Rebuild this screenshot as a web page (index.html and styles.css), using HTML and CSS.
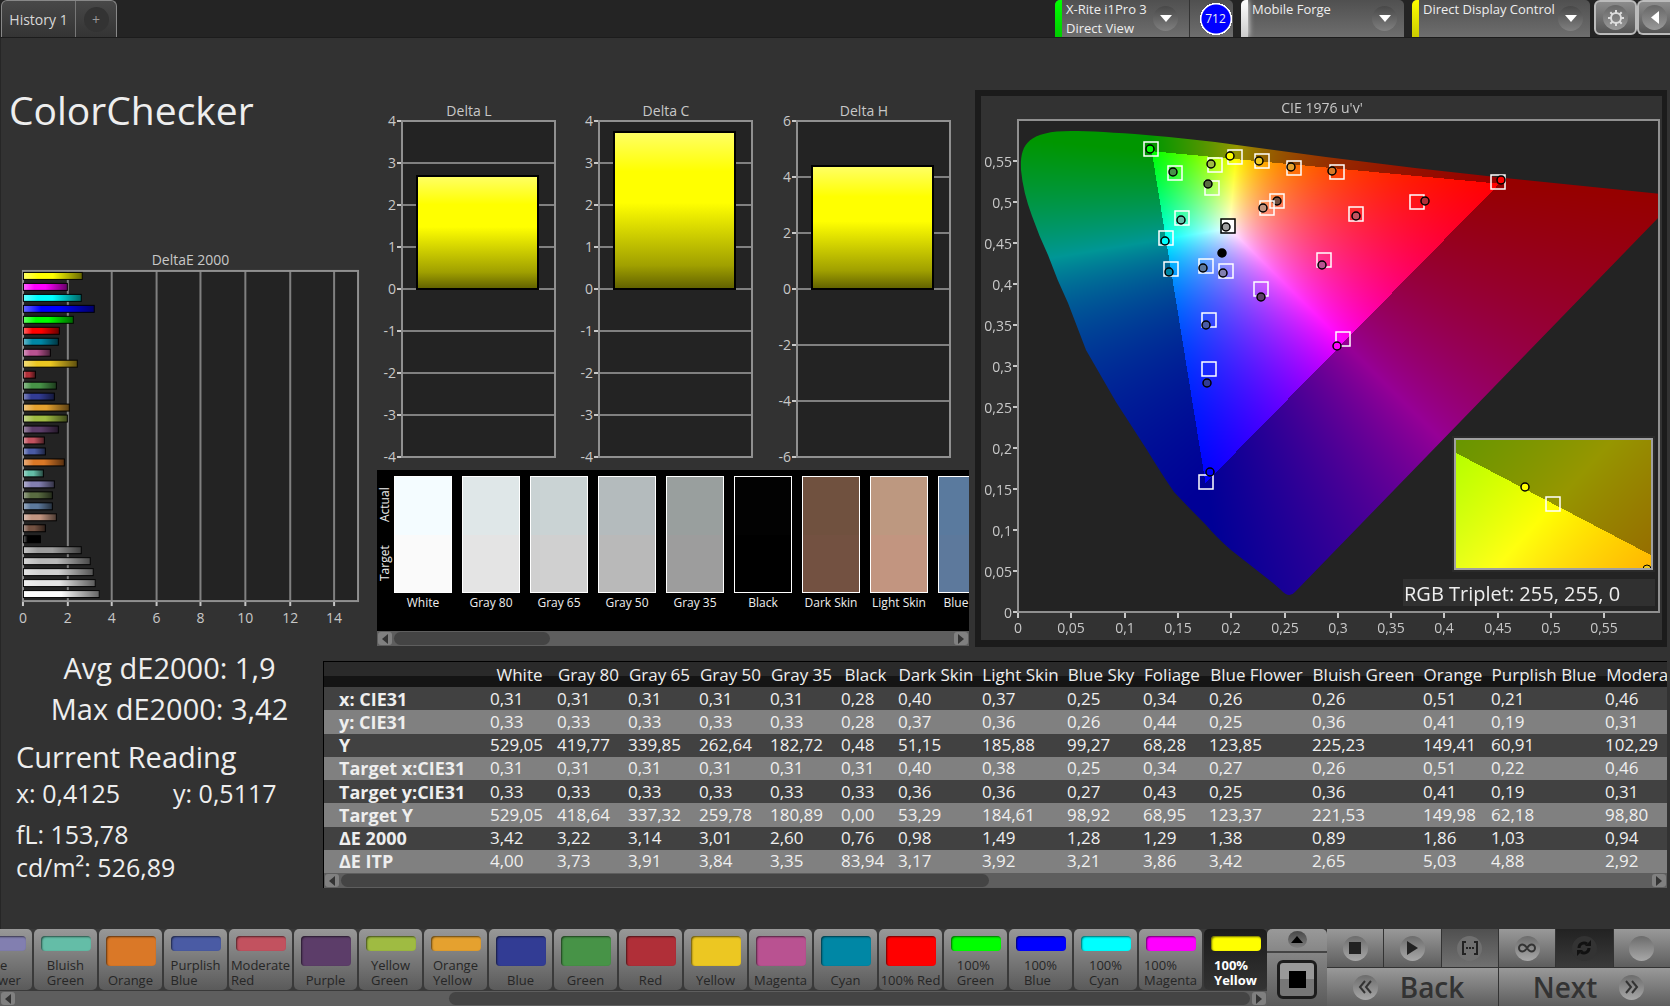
FILE: index.html
```html
<!DOCTYPE html>
<html lang="en">
<head>
  <meta charset="UTF-8">
  <meta name="viewport" content="width=device-width, initial-scale=1.0">
  <title>ColorChecker</title>
  <link rel="stylesheet" href="styles.css">
</head>
<body>
  <header class="topbar">
    <nav class="tabs">
      <button class="tab">History 1</button>
      <button class="tab tab-add" aria-label="Add history"><span class="knob">+</span></button>
    </nav>
    <div class="devices">
      <div class="device device-meter">
        <span class="strip green"></span>
        <button class="device-name">X-Rite i1Pro 3<br>Direct View</button>
        <span class="knob arrow"><svg width="12" height="7"><path d="M0 0h12l-6 7z"/></svg></span>
        <span class="meter-id">712</span>
      </div>
      <div class="device device-source">
        <span class="strip white"></span>
        <select class="device-name" aria-label="Source"><option>Mobile Forge</option></select>
        <span class="knob arrow"><svg width="12" height="7"><path d="M0 0h12l-6 7z"/></svg></span>
      </div>
      <div class="device device-display">
        <span class="strip yellow"></span>
        <select class="device-name" aria-label="Display"><option>Direct Display Control</option></select>
        <span class="knob arrow"><svg width="12" height="7"><path d="M0 0h12l-6 7z"/></svg></span>
      </div>
      <button class="tool" aria-label="Settings"><span class="knob light">
        <svg width="18" height="18" viewBox="0 0 18 18"><circle cx="9" cy="9" r="5" fill="none" stroke="#ddd" stroke-width="2"/><path d="M9 1v3M9 14v3M1 9h3M14 9h3M3.300 3.300l2.200 2.200M12.500 12.500l2.200 2.200M3.300 14.700l2.200-2.200M12.500 5.500l2.200-2.200" stroke="#ddd" stroke-width="2"/></svg>
      </span></button>
      <button class="tool tool-last" aria-label="Collapse"><span class="knob light"><svg width="8" height="13"><path d="M8 0v13L0 6.500z" fill="#fff"/></svg></span></button>
    </div>
  </header>

  <main class="workspace">
    <section class="upper">
      <div class="col-left">
        <h1>ColorChecker</h1>
        <svg id="deltaE" class="chart" viewBox="0 0 377 380"></svg>
      </div>
      <div class="col-mid">
        <svg id="deltas" class="chart" viewBox="0 0 592 380"></svg>
        <div class="compare">
          <div class="compare-side"><span>Target</span><span>Actual</span></div>
          <div class="compare-list" id="compareList"></div>
        </div>
        <div class="scrollbar">
          <button class="sb-btn" aria-label="Scroll left"><svg width="6" height="10"><path d="M6 0v10L0 5z"/></svg></button>
          <div class="sb-track"><div class="sb-thumb" style="width: 28%"></div></div>
          <button class="sb-btn" aria-label="Scroll right"><svg width="6" height="10"><path d="M0 0v10l6-5z"/></svg></button>
        </div>
      </div>
      <div class="col-right">
        <div class="cie">
          <svg id="cie" class="chart" viewBox="0 0 681 544">
            <rect x="37" y="24" width="641" height="492" fill="#232323"/>
            <foreignObject x="37" y="24" width="641" height="492"><canvas id="cieCanvas" width="641" height="492"></canvas></foreignObject>
            <g id="cieAxes"></g>
            <g id="cieMarks"></g>
            <rect x="422" y="483" width="252" height="27" fill="#303030"/>
            <text x="423" y="505" class="rgb-label">RGB Triplet: 255, 255, 0</text>
            <rect x="471" y="340" width="203" height="136" fill="#2a2a2a"/>
            <foreignObject x="474" y="343" width="197" height="130"><canvas id="insetCanvas" width="197" height="130"></canvas></foreignObject>
            <g id="insetMarks"></g>
            <rect x="474" y="343" width="197" height="130" fill="none" stroke="#a0a0a0" stroke-width="2"/>
          </svg>
        </div>
      </div>
    </section>

    <section class="lower">
      <div class="stats">
        <p class="stat-big center">Avg dE2000: 1,9</p>
        <p class="stat-big center">Max dE2000: 3,42</p>
        <h2 class="stat-big">Current Reading</h2>
        <p class="stat pair"><span>x: 0,4125</span><span>y: 0,5117</span></p>
        <p class="stat">fL: 153,78</p>
        <p class="stat">cd/m²: 526,89</p>
      </div>
      <div class="data">
        <div class="table-clip">
          <table>
            <colgroup>
              <col class="w-label"><col class="w-67"><col class="w-71"><col class="w-71"><col class="w-71"><col class="w-71"><col class="w-57"><col class="w-84"><col class="w-85"><col class="w-76"><col class="w-66"><col class="w-103"><col class="w-111"><col class="w-68"><col class="w-114"><col class="w-124">
            </colgroup>
            <thead>
              <tr><td></td><th>White</th><th>Gray 80</th><th>Gray 65</th><th>Gray 50</th><th>Gray 35</th><th>Black</th><th>Dark Skin</th><th>Light Skin</th><th>Blue Sky</th><th>Foliage</th><th>Blue Flower</th><th>Bluish Green</th><th>Orange</th><th>Purplish Blue</th><th>Moderate Red</th></tr>
            </thead>
            <tbody>
              <tr><th>x: CIE31</th><td>0,31</td><td>0,31</td><td>0,31</td><td>0,31</td><td>0,31</td><td>0,28</td><td>0,40</td><td>0,37</td><td>0,25</td><td>0,34</td><td>0,26</td><td>0,26</td><td>0,51</td><td>0,21</td><td>0,46</td></tr>
              <tr><th>y: CIE31</th><td>0,33</td><td>0,33</td><td>0,33</td><td>0,33</td><td>0,33</td><td>0,28</td><td>0,37</td><td>0,36</td><td>0,26</td><td>0,44</td><td>0,25</td><td>0,36</td><td>0,41</td><td>0,19</td><td>0,31</td></tr>
              <tr><th>Y</th><td>529,05</td><td>419,77</td><td>339,85</td><td>262,64</td><td>182,72</td><td>0,48</td><td>51,15</td><td>185,88</td><td>99,27</td><td>68,28</td><td>123,85</td><td>225,23</td><td>149,41</td><td>60,91</td><td>102,29</td></tr>
              <tr><th>Target x:CIE31</th><td>0,31</td><td>0,31</td><td>0,31</td><td>0,31</td><td>0,31</td><td>0,31</td><td>0,40</td><td>0,38</td><td>0,25</td><td>0,34</td><td>0,27</td><td>0,26</td><td>0,51</td><td>0,22</td><td>0,46</td></tr>
              <tr><th>Target y:CIE31</th><td>0,33</td><td>0,33</td><td>0,33</td><td>0,33</td><td>0,33</td><td>0,33</td><td>0,36</td><td>0,36</td><td>0,27</td><td>0,43</td><td>0,25</td><td>0,36</td><td>0,41</td><td>0,19</td><td>0,31</td></tr>
              <tr><th>Target Y</th><td>529,05</td><td>418,64</td><td>337,32</td><td>259,78</td><td>180,89</td><td>0,00</td><td>53,29</td><td>184,61</td><td>98,92</td><td>68,95</td><td>123,37</td><td>221,53</td><td>149,98</td><td>62,18</td><td>98,80</td></tr>
              <tr><th>ΔE 2000</th><td>3,42</td><td>3,22</td><td>3,14</td><td>3,01</td><td>2,60</td><td>0,76</td><td>0,98</td><td>1,49</td><td>1,28</td><td>1,29</td><td>1,38</td><td>0,89</td><td>1,86</td><td>1,03</td><td>0,94</td></tr>
              <tr><th>ΔE ITP</th><td>4,00</td><td>3,73</td><td>3,91</td><td>3,84</td><td>3,35</td><td>83,94</td><td>3,17</td><td>3,92</td><td>3,21</td><td>3,86</td><td>3,42</td><td>2,65</td><td>5,03</td><td>4,88</td><td>2,92</td></tr>
            </tbody>
          </table>
        </div>
        <div class="scrollbar">
          <button class="sb-btn" aria-label="Scroll left"><svg width="6" height="10"><path d="M6 0v10L0 5z"/></svg></button>
          <div class="sb-track"><div class="sb-thumb" style="width: 49.5%"></div></div>
          <button class="sb-btn" aria-label="Scroll right"><svg width="6" height="10"><path d="M0 0v10l6-5z"/></svg></button>
        </div>
      </div>
    </section>
  </main>

  <footer class="bottombar">
    <div class="patch-area">
      <div class="patches" id="patches"></div>
      <div class="scrollbar">
        <button class="sb-btn" aria-label="Scroll left"><svg width="6" height="10"><path d="M6 0v10L0 5z"/></svg></button>
        <div class="sb-track"><div class="sb-thumb" style="width: 65%; margin-left: auto"></div></div>
        <button class="sb-btn" aria-label="Scroll right"><svg width="6" height="10"><path d="M0 0v10l6-5z"/></svg></button>
      </div>
    </div>
    <div class="pattern">
      <button class="pattern-up" aria-label="Show patterns"><span class="knob small"><svg width="12" height="7"><path d="M0 7h12L6 0z"/></svg></span></button>
      <button class="pattern-window" aria-label="Window pattern"><span></span></button>
    </div>
    <div class="transport">
      <div class="transport-row">
        <button aria-label="Stop"><span class="knob pale"><svg width="12" height="12"><path d="M0 0h12v12H0z"/></svg></span></button>
        <button aria-label="Play"><span class="knob pale"><svg width="11" height="14"><path d="M0 0l11 7-11 7z"/></svg></span></button>
        <button class="dim" aria-label="Read series"><span class="knob pale"><svg width="18" height="14" viewBox="0 0 18 14"><path d="M5 1H2v12h3M13 1h3v12h-3" fill="none" stroke="#222" stroke-width="2"/><path d="M5 6h2v2H5zM8 6h2v2H8zM11 6h2v2h-2z"/></svg></span></button>
        <button aria-label="Continuous"><span class="knob pale"><svg width="18" height="10" viewBox="0 0 18 10"><path d="M9 5C7 2 6 1.500 4.500 1.500a3.500 3.500 0 0 0 0 7C6 8.500 7 8 9 5s3-3.500 4.500-3.500a3.500 3.500 0 0 1 0 7C12 8.500 11 8 9 5z" fill="none" stroke="#333" stroke-width="2"/></svg></span></button>
        <button class="active" aria-label="Repeat"><span class="knob pale"><svg width="16" height="16" viewBox="0 0 16 16"><path d="M3 8a5 5 0 0 1 8-4M13 8a5 5 0 0 1-8 4" fill="none" stroke="#111" stroke-width="3"/><path d="M9 6h6V0zM7 10H1v6z" fill="#111"/></svg></span></button>
        <button aria-label="Record"><span class="knob pale"></span></button>
      </div>
      <div class="transport-row nav">
        <button class="back"><span class="knob pale"><svg width="15" height="14" viewBox="0 0 15 14"><path d="M7 1L2 7l5 6M13 1L8 7l5 6" fill="none" stroke="#333" stroke-width="2"/></svg></span>Back</button>
        <button class="next">Next<span class="knob pale"><svg width="15" height="14" viewBox="0 0 15 14"><path d="M2 1l5 6-5 6M8 1l5 6-5 6" fill="none" stroke="#333" stroke-width="2"/></svg></span></button>
      </div>
    </div>
  </footer>
  <script src="script.js"></script>
</body>
</html>
```
FILE: styles.css
```css
* {
  box-sizing: border-box;
}
body {
  margin: 0;
  min-height: 100vh;
  display: flex;
  flex-direction: column;
  overflow: hidden;
  background: #323232;
  color: #eee;
  font-family: "Open Sans", "Noto Sans", sans-serif;
}
button, select {
  font: inherit;
  color: inherit;
  border: none;
  padding: 0;
  margin: 0;
  background: none;
}
h1, h2, p {
  margin: 0;
  font-weight: 400;
}
svg {
  display: block;
}

/* top bar */
.topbar {
  display: flex;
  justify-content: space-between;
  height: 38px;
  background: #242424;
  border-bottom: 1px solid #1c1c1c;
}
.tabs {
  display: flex;
  margin-left: 1px;
  border: 1px solid #888;
  border-bottom: none;
  border-radius: 6px 6px 0 0;
  background: linear-gradient(#484848, #343434);
}
.tab {
  width: 73px;
  font-size: 14px;
  color: #d8d8d8;
}
.tab-add {
  width: 41px;
  border-left: 1px solid #777;
  display: flex;
  align-items: center;
  justify-content: center;
}
.tab-add .knob {
  background: #333;
  color: #999;
}
.knob {
  width: 25px;
  height: 25px;
  flex: none;
  border-radius: 50%;
  display: flex;
  align-items: center;
  justify-content: center;
  background: linear-gradient(#484848, #808080);
}
.knob.light {
  background: linear-gradient(#666, #999);
}
.knob.pale {
  background: linear-gradient(#6c6c6c, #a8a8a8);
}
.knob.small {
  width: 19px;
  height: 17px;
}
.arrow {
  fill: #fff;
}
.devices {
  display: flex;
  height: 37px;
}
.device {
  display: flex;
  align-items: center;
  margin-right: 8px;
  border-radius: 5px 5px 0 0;
  background: linear-gradient(#505050, #6e6e6e);
  overflow: hidden;
}
.device-meter {
  width: 178px;
}
.device-source {
  width: 163px;
}
.device-display {
  width: 178px;
  margin-right: 4px;
}
.strip {
  width: 7px;
  align-self: stretch;
}
.strip.green {
  background: linear-gradient(#0f0, #0c0);
}
.strip.white {
  background: linear-gradient(#fff, #ccc);
  box-shadow: 0 0 6px #fff;
}
.strip.yellow {
  background: linear-gradient(#ff0, #cc0);
}
.device-name {
  flex: 1;
  height: 37px;
  padding-left: 4px;
  font-size: 13px;
  line-height: 19px;
  text-align: left;
  white-space: nowrap;
  appearance: none;
}
select.device-name {
  padding-bottom: 19px;
  margin-right: -24px;
}
.arrow {
  margin-right: 7px;
}
.device-meter .arrow {
  margin-right: 11px;
}
.meter-id {
  width: 44px;
  height: 37px;
  display: flex;
  align-items: center;
  justify-content: center;
  padding-left: 8px;
  border-left: 1px solid #333;
  font-size: 12px;
  background: radial-gradient(circle at 26px 19px, #00f 14px, #fff 15px, #fff 16px, transparent 16px);
}
.tool {
  width: 43px;
  height: 35px;
  display: flex;
  align-items: center;
  justify-content: center;
  border: 2px solid #bbb;
  border-radius: 6px;
  background: linear-gradient(#8c8c8c, #555);
}
.tool-last {
  width: 33px;
  border-right: none;
  border-radius: 6px 0 0 6px;
}

/* charts */
.workspace {
  flex: 1;
  border-left: 2px solid #262626;
  margin-left: -1px;
}
.chart {
  width: 100%;
  height: auto;
}
.chart text {
  font-size: 14px;
  fill: #c8c8c8;
}
.chart .rgb-label {
  font-size: 20px;
  fill: #eee;
}
.chart canvas {
  display: block;
}
.frame {
  fill: none;
  stroke: #909090;
  stroke-width: 2;
}
.plot-bg {
  fill: #232323;
}
.grid-line {
  stroke: #808080;
  stroke-width: 2;
}
.tick {
  stroke: #c8c8c8;
  stroke-width: 2;
}
.upper {
  display: grid;
  grid-template-columns: minmax(0, 376fr) minmax(0, 592fr) minmax(0, 701fr);
}
.col-left {
  display: flex;
  flex-direction: column;
}
h1 {
  margin: 48px 0 116px 8px;
  font-size: 39px;
  line-height: 48px;
}
.col-mid {
  padding-top: 52px;
}
.compare {
  display: flex;
  height: 161px;
  background: #000;
  overflow: hidden;
}
.compare-side {
  display: flex;
  width: 16px;
  height: 117px;
  margin-top: 6px;
  flex: none;
  justify-content: space-around;
  font-size: 12px;
  line-height: 16px;
  writing-mode: vertical-rl;
  transform: rotate(180deg);
}
.compare-list {
  display: flex;
  gap: 10px;
  padding: 6px 0 0 1px;
}
.compare-item {
  width: 58px;
  flex: none;
  font-size: 12px;
  line-height: 20px;
  text-align: center;
  white-space: nowrap;
}
.compare-color {
  height: 117px;
  border: 1px solid #fff;
}

/* scrollbar */
.scrollbar {
  display: flex;
  align-items: center;
  height: 15px;
  padding: 0 1px;
  gap: 2px;
  background: #5e5e5e;
}
.sb-btn {
  width: 14px;
  height: 13px;
  display: flex;
  align-items: center;
  justify-content: center;
  border-radius: 3px;
  background: #808080;
  fill: #333;
}
.sb-track {
  flex: 1;
}
.sb-thumb {
  height: 13px;
  border-radius: 7px;
  background: #444;
}

/* CIE */
.col-right {
  padding: 52px 3px 0 6px;
}
.cie {
  padding: 6px 5px 7px 6px;
  background: #1b1b1b;
}
.cie .chart {
  background: #323232;
}

/* readings and table */
.lower {
  display: grid;
  grid-template-columns: 322px 1fr;
  padding-right: 3px;
}
.stats {
  padding-left: 15px;
}
.stat-big {
  font-size: 29px;
  line-height: 41px;
}
.center {
  text-align: center;
}
h2.stat-big {
  margin-top: 7px;
}
.stat {
  font-size: 25px;
  line-height: 33px;
}
.pair {
  display: grid;
  grid-template-columns: 157px 1fr;
  margin-bottom: 8px;
}
.data {
  margin-top: 14px;
  border-top: 1px solid #000;
  border-left: 1px solid #000;
  min-width: 0;
}
.table-clip {
  overflow: hidden;
}
table {
  width: 1400px;
  height: 211px;
  table-layout: fixed;
  border-collapse: collapse;
  font-size: 17px;
  line-height: 20px;
}
.w-label { width: 162px; }
.w-57 { width: 57px; }
.w-66 { width: 66px; }
.w-67 { width: 67px; }
.w-68 { width: 68px; }
.w-71 { width: 71px; }
.w-76 { width: 76px; }
.w-84 { width: 84px; }
.w-85 { width: 85px; }
.w-103 { width: 103px; }
.w-111 { width: 111px; }
.w-114 { width: 114px; }
.w-124 { width: 123px; }
th, td {
  padding: 0 0 0 4px;
  text-align: left;
  white-space: nowrap;
}
thead tr {
  height: 25px;
  background: linear-gradient(#2a2a2a 55%, #141414 55%);
}
thead th {
  padding: 0;
  font-weight: 400;
  text-align: center;
}
tbody tr {
  background: #414141;
}
tbody tr:nth-child(even) {
  background: #808080;
}
tbody th {
  padding-left: 15px;
  font-size: 18px;
  font-weight: 700;
}

/* bottom bar */
.bottombar {
  display: flex;
  height: 77px;
  color: #262626;
}
.patch-area {
  flex: 1;
  min-width: 0;
  display: flex;
  flex-direction: column;
  justify-content: space-between;
  background: #3a3a3a;
}
.patches {
  display: flex;
  justify-content: flex-end;
  gap: 2px;
  overflow: hidden;
}
.patch {
  width: 63px;
  height: 61px;
  flex: none;
  display: flex;
  flex-direction: column;
  align-items: center;
  padding: 7px 0 2px;
  gap: 7px;
  border-radius: 5px;
  background: linear-gradient(#989898, #5a5a5a);
  font-size: 13px;
  line-height: 15px;
  text-align: left;
  white-space: nowrap;
}
.patch.selected {
  background: linear-gradient(#1c1c1c, #333);
  color: #fff;
  font-weight: 700;
}
.patch-color {
  width: 50px;
  flex: 1;
  border-radius: 4px;
  box-shadow: inset 1px 1px 2px rgba(0, 0, 0, 0.6);
}
.pattern {
  width: 60px;
  display: flex;
  flex-direction: column;
  border-radius: 5px 5px 0 0;
  background: linear-gradient(#999, #5a5a5a);
}
.pattern-up {
  height: 24px;
  display: flex;
  align-items: center;
  justify-content: center;
  border-bottom: 2px solid #444;
}
.pattern-window {
  width: 40px;
  height: 40px;
  margin: 7px auto;
  border: 3px solid #1c1c1c;
  border-radius: 6px;
  background: linear-gradient(#999 50%, #777 50%);
}
.pattern-window span {
  display: block;
  width: 17px;
  height: 17px;
  margin: auto;
  background: #000;
}
.transport {
  width: 343px;
  display: flex;
  flex-direction: column;
  gap: 1px;
  background: #333;
}
.transport-row {
  flex: 1;
  display: flex;
  gap: 1px;
}
.transport-row button {
  flex: 1;
  display: flex;
  align-items: center;
  justify-content: center;
  background: linear-gradient(#999, #5e5e5e);
  fill: #222;
}
.transport-row .dim {
  background: linear-gradient(#505050, #707070);
}
.transport-row .dim .knob {
  background: #707070;
}
.transport-row .active {
  background: linear-gradient(#222, #3a3a3a);
}
.transport-row .active .knob {
  background: #333;
}
.nav button {
  gap: 22px;
  font-size: 28px;
  font-weight: 600;
  line-height: 36px;
  color: #333;
}
.nav .back {
  padding-right: 8px;
}
.nav .next {
  padding-left: 8px;
}
```
FILE: script.js
```js
const patchData = [
  // name, target colour, measured colour, deltaE
  ['White', '#fafafa', '#f4fcff', 3.42],
  ['Gray 80', '#e4e4e4', '#dfe7e8', 3.22],
  ['Gray 65', '#d0d0d0', '#cad3d4', 3.14],
  ['Gray 50', '#b9b9b9', '#b4bbbd', 3.01],
  ['Gray 35', '#9d9d9d', '#999f9e', 2.6],
  ['Black', '#000000', '#020202', 0.76],
  ['Dark Skin', '#735141', '#70513f', 0.98],
  ['Light Skin', '#c29580', '#bd9880', 1.49],
  ['Blue Sky', '#5d799c', '#5a7a9e', 1.28],
  ['Foliage', '#596b41', '#596b41', 1.29],
  ['Blue Flower', '#827fb0', '#827fb0', 1.38],
  ['Bluish Green', '#64bda7', '#64bda7', 0.89],
  ['Orange', '#da7827', '#da7827', 1.86],
  ['Purplish Blue', '#4a5ba4', '#4a5ba4', 0.98],
  ['Moderate Red', '#c2525f', '#c2525f', 0.94],
  ['Purple', '#5c3d69', '#5c3d69', 1.56],
  ['Yellow Green', '#9fbb42', '#9fbb42', 1.98],
  ['Orange Yellow', '#e5a12f', '#e5a12f', 2.05],
  ['Blue', '#323c94', '#323c94', 1.38],
  ['Green', '#479347', '#479347', 1.48],
  ['Red', '#b02f38', '#b02f38', 0.56],
  ['Yellow', '#ecc722', '#ecc722', 2.4],
  ['Magenta', '#b95291', '#b95291', 1.2],
  ['Cyan', '#0087a5', '#0087a5', 1.56],
  ['100% Red', '#ff0000', '#ff0000', 1.6],
  ['100% Green', '#00ff00', '#00ff00', 2.25],
  ['100% Blue', '#0000ff', '#0000ff', 3.2],
  ['100% Cyan', '#00ffff', '#00ffff', 2.6],
  ['100% Magenta', '#ff00ff', '#ff00ff', 1.96],
  ['100% Yellow', '#ffff00', '#ffff00', 2.66]
];

const line = (x1, y1, x2, y2, cls) => `<line x1="${x1}" y1="${y1}" x2="${x2}" y2="${y2}" class="${cls}"/>`;
const text = (x, y, s, anchor) => `<text x="${x}" y="${y}" text-anchor="${anchor}">${s}</text>`;
const comma = n => String(n).replace('.', ',');

// patch comparison strip
document.getElementById('compareList').innerHTML = patchData.slice(0, 9).map(([name, target, actual]) =>
  `<div class="compare-item"><div class="compare-color" style="background: linear-gradient(${actual} 50%, ${target} 50%)"></div>${name}</div>`
).join('');

// patch buttons
document.getElementById('patches').innerHTML = patchData.slice(10).map(([name, color], i, all) =>
  `<button class="patch${i === all.length - 1 ? ' selected' : ''}"><span class="patch-color" style="background: ${color}"></span><span>${name === '100% Red' ? name : name.replace(' ', '<br>')}</span></button>`
).join('');

// DeltaE 2000
function drawDeltaE() {
  const left = 22, top = 21, w = 336, h = 331, unit = 22.3;
  let s = '<defs><linearGradient id="shadeH"><stop offset="0" stop-color="#fff" stop-opacity=".4"/><stop offset=".25" stop-color="#fff" stop-opacity="0"/><stop offset=".5" stop-opacity="0"/><stop offset="1" stop-opacity=".6"/></linearGradient></defs>';
  s += text(190, 15, 'DeltaE 2000', 'middle');
  s += `<rect x="${left}" y="${top}" width="${w}" height="${h}" class="plot-bg"/>`;
  for (let v = 0; v <= 14; v += 2) {
    const x = Math.round(left + v * unit);
    if (v) s += line(x, top, x, top + h, 'grid-line');
    s += line(x, top + h, x, top + h + 5, 'tick') + text(x, 374, v, 'middle');
  }
  s += `<rect x="${left}" y="${top}" width="${w}" height="${h}" class="frame"/>`;
  patchData.slice().reverse().forEach(([, color, , de], i) => {
    const box = `x="${left}.5" y="${22.5 + 11 * i}" width="${Math.round(de * unit)}" height="7"`;
    s += `<rect ${box} fill="${color}"/><rect ${box} fill="url(#shadeH)" stroke="#000"/>`;
  });
  document.getElementById('deltaE').innerHTML = s;
}

// Delta L / C / H
function drawDeltas() {
  const charts = [['Delta L', 25, 4, 1, 86], ['Delta C', 222, 4, 1, 42], ['Delta H', 420, 6, 2, 76]];
  const top = 31, h = 336, w = 153;
  let s = '<defs><linearGradient id="shadeV" x2="0" y2="1"><stop offset="0" stop-color="#ffff66"/><stop offset=".25" stop-color="#ff0"/><stop offset=".45" stop-color="#ff0"/><stop offset=".85" stop-color="#a0a000"/><stop offset="1" stop-color="#606000"/></linearGradient></defs>';
  charts.forEach(([title, left, max, step, barTop]) => {
    s += text(left + 67, 26, title, 'middle');
    s += `<rect x="${left}" y="${top}" width="${w}" height="${h}" class="plot-bg"/>`;
    for (let v = max; v >= -max; v -= step) {
      const y = Math.round(top + (max - v) * h / (2 * max));
      s += line(left, y, left + w, y, 'grid-line') + line(left - 5, y, left, y, 'tick');
      s += text(left - 6, y + 5, v, 'end');
    }
    s += `<rect x="${left}" y="${top}" width="${w}" height="${h}" class="frame"/>`;
    s += `<rect x="${left + 15}" y="${barTop}" width="121" height="${199 - barTop}" fill="url(#shadeV)" stroke="#000" stroke-width="2"/>`;
  });
  document.getElementById('deltas').innerHTML = s;
}

// xy chromaticity -> normalised rgb, darker outside the Rec.709 triangle
function chromaToRgb(x, y) {
  const X = x / y, Z = (1 - x - y) / y;
  const lin = [
    3.2406 * X - 1.5372 - 0.4986 * Z,
    -0.9689 * X + 1.8758 + 0.0415 * Z,
    0.0557 * X - 0.204 + 1.057 * Z
  ];
  const max = Math.max(...lin);
  const k = Math.min(...lin) < -0.0005 ? 150 : 255;
  return lin.map(c => k * Math.max(c, 0) / max);
}

function paint(canvas, toXy) {
  const ctx = canvas.getContext('2d');
  const img = ctx.createImageData(canvas.width, canvas.height);
  let p = 0;
  for (let j = 0; j < canvas.height; j++) {
    for (let i = 0; i < canvas.width; i++) {
      const [r, g, b] = chromaToRgb(...toXy(i, j));
      img.data[p++] = r;
      img.data[p++] = g;
      img.data[p++] = b;
      img.data[p++] = 255;
    }
  }
  ctx.putImageData(img, 0, 0);
  return ctx;
}

function drawCie() {
  const ctx = paint(document.getElementById('cieCanvas'), (i, j) => {
    const u = i / 1066, v = (492 - j) / 820;
    const d = 6 * u - 16 * v + 12;
    return [9 * u / d, 4 * v / d];
  });
  // spectral locus
  ctx.globalCompositeOperation = 'destination-in';
  ctx.translate(-37, -24);
  ctx.fill(new Path2D('M40 74C39 50 45 35 90 35C125 35 200 41 256 49L345 61L434 72L524 82L680 98V119L314 496Q308 503 300 494L292 487L250 454Q235 441 225 429Q208 412 193 396Q180 377 166 354L135 306L105 254L87 207Q76 184 67 159Q58 140 51 120Q42 96 40 74Z'));

  paint(document.getElementById('insetCanvas'), (i, j) => [0.4193 + (i - 98) / 3940, 0.5053 - (j - 65) / 2600]);

  let s = text(341, 17, "CIE 1976 u'v'", 'middle');
  for (let n = 0; n < 12; n++) {
    const label = comma(n * 5 / 100);
    const x = Math.round(37 + n * 53.3), y = 516 - n * 41;
    s += line(x, 516, x, 522, 'tick') + text(x, 537, label, 'middle');
    s += line(32, y, 37, y, 'tick') + text(31, y + 6, label, 'end');
  }
  s += '<rect x="37" y="24" width="641" height="492" class="frame"/>';
  document.getElementById('cieAxes').innerHTML = s;

  const square = (x, y, c = '#fff') => `<rect x="${x - 7}" y="${y - 7}" width="14" height="14" fill="none" stroke="${c}" stroke-width="1.5"/>`;
  const dot = (x, y, c) => `<circle cx="${x}" cy="${y}" r="4" fill="${c}" stroke="#000" stroke-width="1.5"/>`;
  // target x, y, measured x, y, colour
  const marks = [
    [170, 53, 169, 53, '#00ff00'], [254, 61, 249, 60, '#ffff00'], [281, 65, 278, 65, '#ecc722'],
    [313, 72, 310, 71, '#e5a12f'], [356, 76, 351, 75, '#da7827'], [517, 86, 520, 84, '#ff0000'],
    [436, 106, 444, 105, '#b02f38'], [194, 77, 192, 76, '#479347'], [234, 69, 230, 68, '#9fbb42'],
    [231, 92, 227, 88, '#596b41'], [296, 105, 296, 105, '#735141'], [286, 112, 282, 112, '#c29580'],
    [375, 118, 375, 120, '#c2525f'], [201, 122, 200, 124, '#64bda7'], [185, 142, 184, 145, '#00ffff'],
    [190, 173, 188, 176, '#0087a5'], [225, 170, 222, 172, '#5d799c'], [245, 175, 242, 177, '#827fb0'],
    [280, 193, 280, 201, '#5c3d69'], [343, 164, 341, 169, '#b95291'], [228, 224, 225, 229, '#4a5ba4'],
    [362, 243, 356, 250, '#ff00ff'], [228, 273, 226, 287, '#323c94'], [225, 386, 229, 376, '#0000ff']
  ];
  document.getElementById('cieMarks').innerHTML =
    marks.map(([tx, ty, x, y, c]) => square(tx, ty) + dot(x, y, c)).join('') +
    '<rect x="241" y="124" width="12" height="12" fill="#fff"/>' + square(247, 130, '#000') + dot(245, 131, '#9d9d9d') + dot(241, 157, '#000');
  document.getElementById('insetMarks').innerHTML = dot(544, 391, '#ffff00') + square(572, 408) +
    '<path d="M662 473a4 4 0 0 1 8 0" fill="#ecc722" stroke="#000"/>';
}

drawDeltaE();
drawDeltas();
drawCie();
```
